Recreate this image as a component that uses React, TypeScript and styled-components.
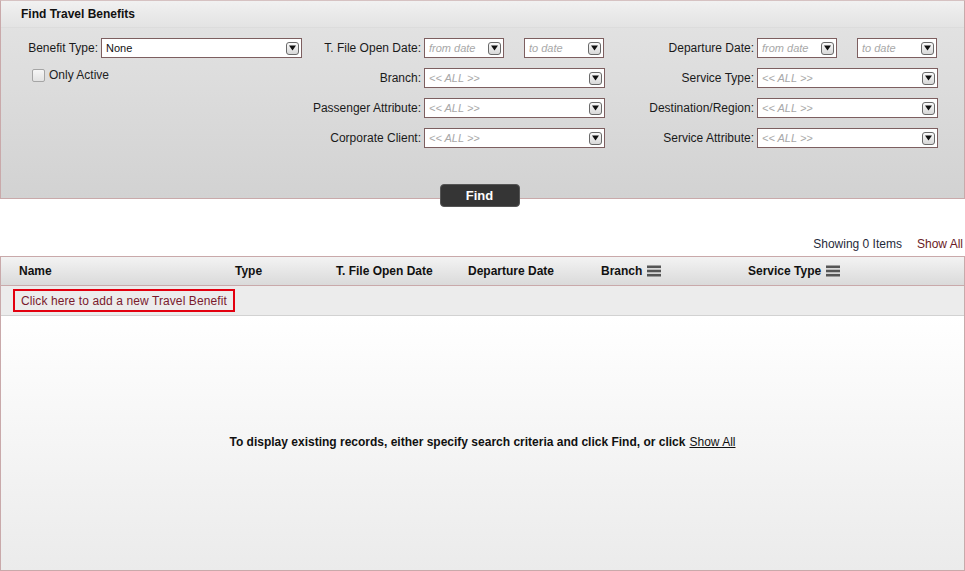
import React from "react";
import styled, { createGlobalStyle } from "styled-components";

// Global ===================================================================

const GlobalStyle = createGlobalStyle`
    html, body {
        margin: 0;
        padding: 0;
        background: #ffffff;
    }
    body {
        font-family: "Liberation Sans", Arial, sans-serif;
        font-size: 12px;
        color: #222;
    }
`;

// Styled Components ======================================================

const Page = styled.div`
    width: 965px;
    height: 571px;
    display: flex;
    flex-direction: column;
    box-sizing: border-box;
`;

const SearchPanel = styled.section`
    height: 199px;
    box-sizing: border-box;
    border: 1px solid #c9a9aa;
    border-top-color: #d6c2c2;
    background: linear-gradient(#e4e4e4, #d2d2d2);
    display: flex;
    flex-direction: column;
`;

const PanelHeader = styled.div`
    height: 26px;
    display: flex;
    align-items: center;
    padding-left: 20px;
    font-weight: bold;
    font-size: 12px;
    color: #111;
    background: linear-gradient(#f1f1f1, #e3e3e3);
    border-bottom: 1px solid #dcdcdc;
`;

const FormGrid = styled.div`
    display: grid;
    grid-template-columns: 100px 201px 122px 181px 152px 181px;
    grid-auto-rows: 20px;
    row-gap: 10px;
    padding-top: 10px;
    align-items: center;
`;

const Label = styled.label<{ $col: number }>`
    grid-column: ${(p) => p.$col};
    text-align: right;
    padding-right: 3px;
    white-space: nowrap;
    color: #1a1a1a;
    font-size: 12px;
`;

const SelectBox = styled.div<{ $width?: number }>`
    width: ${(p) => (p.$width ? `${p.$width}px` : "100%")};
    height: 20px;
    box-sizing: border-box;
    border: 1px solid #7d5f60;
    background: #fff;
    display: flex;
    align-items: center;
    justify-content: space-between;
    padding: 0 2px 0 4px;
`;

const SelectText = styled.span<{ $placeholder?: boolean }>`
    font-size: 11px;
    color: ${(p) => (p.$placeholder ? "#a8a8a8" : "#111")};
    font-style: ${(p) => (p.$placeholder ? "italic" : "normal")};
`;

const DropButton = styled.span`
    width: 13px;
    height: 13px;
    box-sizing: border-box;
    border: 1px solid #6a6a6a;
    border-radius: 3px;
    background: linear-gradient(#fafafa, #d8d8d8);
    display: flex;
    align-items: center;
    justify-content: center;
`;

const DatePair = styled.div`
    display: flex;
    gap: 20px;
`;

const CheckRow = styled.label`
    grid-column: 1 / 3;
    align-self: start;
    display: flex;
    align-items: center;
    gap: 4px;
    padding-left: 31px;
    color: #222;
`;

const CheckBox = styled.span`
    width: 11px;
    height: 11px;
    border: 1px solid #a5a5a5;
    border-radius: 2px;
    background: linear-gradient(#f6f6f6, #e2e2e2);
`;

const FindRow = styled.div`
    display: flex;
    justify-content: center;
    margin-top: -15px;
    padding-right: 6px;
    position: relative;
`;

const FindButton = styled.button`
    width: 80px;
    height: 23px;
    border: 1px solid #555;
    border-radius: 4px;
    background: #353535;
    color: #fff;
    font-family: "Liberation Sans", Arial, sans-serif;
    font-weight: bold;
    font-size: 13px;
    cursor: pointer;
`;

const SummaryRow = styled.div`
    display: flex;
    justify-content: flex-end;
    align-items: center;
    gap: 15px;
    height: 20px;
    margin-top: 27px;
    margin-bottom: 2px;
    padding-right: 2px;
    font-size: 12px;
`;

const Muted = styled.span`
    color: #1f2a3a;
`;

const MaroonLink = styled.a`
    color: #6b1a24;
    text-decoration: none;
`;

const Table = styled.div`
    flex: 1;
    display: flex;
    flex-direction: column;
    border: 1px solid #c9a9aa;
    box-sizing: border-box;
`;

const HeaderRow = styled.div`
    height: 28px;
    display: flex;
    align-items: center;
    background: linear-gradient(#f3f3f3, #dadada);
    border-bottom: 1px solid #c9a9aa;
`;

const HeadCell = styled.div<{ $left: number }>`
    width: ${(p) => p.$left}px;
    flex: none;
    display: flex;
    align-items: center;
    gap: 5px;
    font-weight: bold;
    font-size: 12px;
    color: #111;
    padding-left: 18px;
    box-sizing: border-box;
`;

const AddRow = styled.div`
    height: 29px;
    display: flex;
    align-items: center;
    padding-left: 12px;
    background: #ececec;
    border-bottom: 1px solid #d2d2d2;
`;

const AddLink = styled.a`
    display: inline-flex;
    align-items: center;
    height: 23px;
    box-sizing: border-box;
    padding: 0 6px;
    border: 2px solid #e3000f;
    color: #7a1a2c;
    font-size: 12px;
    letter-spacing: 0.1px;
    text-decoration: none;
`;

const TableBody = styled.div`
    flex: 1;
    display: flex;
    align-items: center;
    justify-content: center;
    padding-bottom: 2px;
    background: linear-gradient(#ffffff, #ebebeb);
    font-weight: bold;
    font-size: 12px;
    color: #111;
`;

const InlineLink = styled.a`
    font-weight: normal;
    color: #111;
    text-decoration: underline;
    margin-left: 4px;
`;

// Icons ==================================================================

function ArrowIcon() {
    return (
        <svg width="7" height="6" viewBox="0 0 7 6">
            <path d="M0 0.5 L7 0.5 L3.5 5.5 Z" fill="#111" />
        </svg>
    );
}

function MenuIcon() {
    return (
        <svg width="14" height="12" viewBox="0 0 14 12">
            <rect x="0" y="0.5" width="14" height="2.6" fill="#555" />
            <rect x="0" y="4.7" width="14" height="2.6" fill="#555" />
            <rect x="0" y="8.9" width="14" height="2.6" fill="#555" />
        </svg>
    );
}

// Parts ==================================================================

function Select({ text, placeholder, width }: { text: string; placeholder?: boolean; width?: number }) {
    return (
        <SelectBox $width={width}>
            <SelectText $placeholder={placeholder}>{text}</SelectText>
            <DropButton><ArrowIcon /></DropButton>
        </SelectBox>
    );
}

function DateRange() {
    return (
        <DatePair>
            <Select text="from date" placeholder width={80} />
            <Select text="to date" placeholder width={80} />
        </DatePair>
    );
}

const columns = [
    { title: "Name", width: 216 },
    { title: "Type", width: 101 },
    { title: "T. File Open Date", width: 132 },
    { title: "Departure Date", width: 133 },
    { title: "Branch", width: 147, menu: true },
    { title: "Service Type", width: 150, menu: true },
];

export default function App() {
    return (
        <Page>
            <GlobalStyle />
            <SearchPanel>
                <PanelHeader>Find Travel Benefits</PanelHeader>
                <FormGrid>
                    <Label $col={1}>Benefit Type:</Label>
                    <Select text="None" />
                    <Label $col={3}>T. File Open Date:</Label>
                    <DateRange />
                    <Label $col={5}>Departure Date:</Label>
                    <DateRange />

                    <CheckRow><CheckBox />Only Active</CheckRow>
                    <Label $col={3}>Branch:</Label>
                    <Select text="<< ALL >>" placeholder />
                    <Label $col={5}>Service Type:</Label>
                    <Select text="<< ALL >>" placeholder />

                    <Label $col={3}>Passenger Attribute:</Label>
                    <Select text="<< ALL >>" placeholder />
                    <Label $col={5}>Destination/Region:</Label>
                    <Select text="<< ALL >>" placeholder />

                    <Label $col={3}>Corporate Client:</Label>
                    <Select text="<< ALL >>" placeholder />
                    <Label $col={5}>Service Attribute:</Label>
                    <Select text="<< ALL >>" placeholder />
                </FormGrid>
            </SearchPanel>

            <FindRow>
                <FindButton type="button">Find</FindButton>
            </FindRow>

            <SummaryRow>
                <Muted>Showing 0 Items</Muted>
                <MaroonLink href="#">Show All</MaroonLink>
            </SummaryRow>

            <Table>
                <HeaderRow>
                    {columns.map((c) => (
                        <HeadCell key={c.title} $left={c.width}>
                            {c.title}
                            {c.menu && <MenuIcon />}
                        </HeadCell>
                    ))}
                </HeaderRow>
                <AddRow>
                    <AddLink href="#">Click here to add a new Travel Benefit</AddLink>
                </AddRow>
                <TableBody>
                    To display existing records, either specify search criteria and click Find, or click
                    <InlineLink href="#">Show All</InlineLink>
                </TableBody>
            </Table>
        </Page>
    );
}
